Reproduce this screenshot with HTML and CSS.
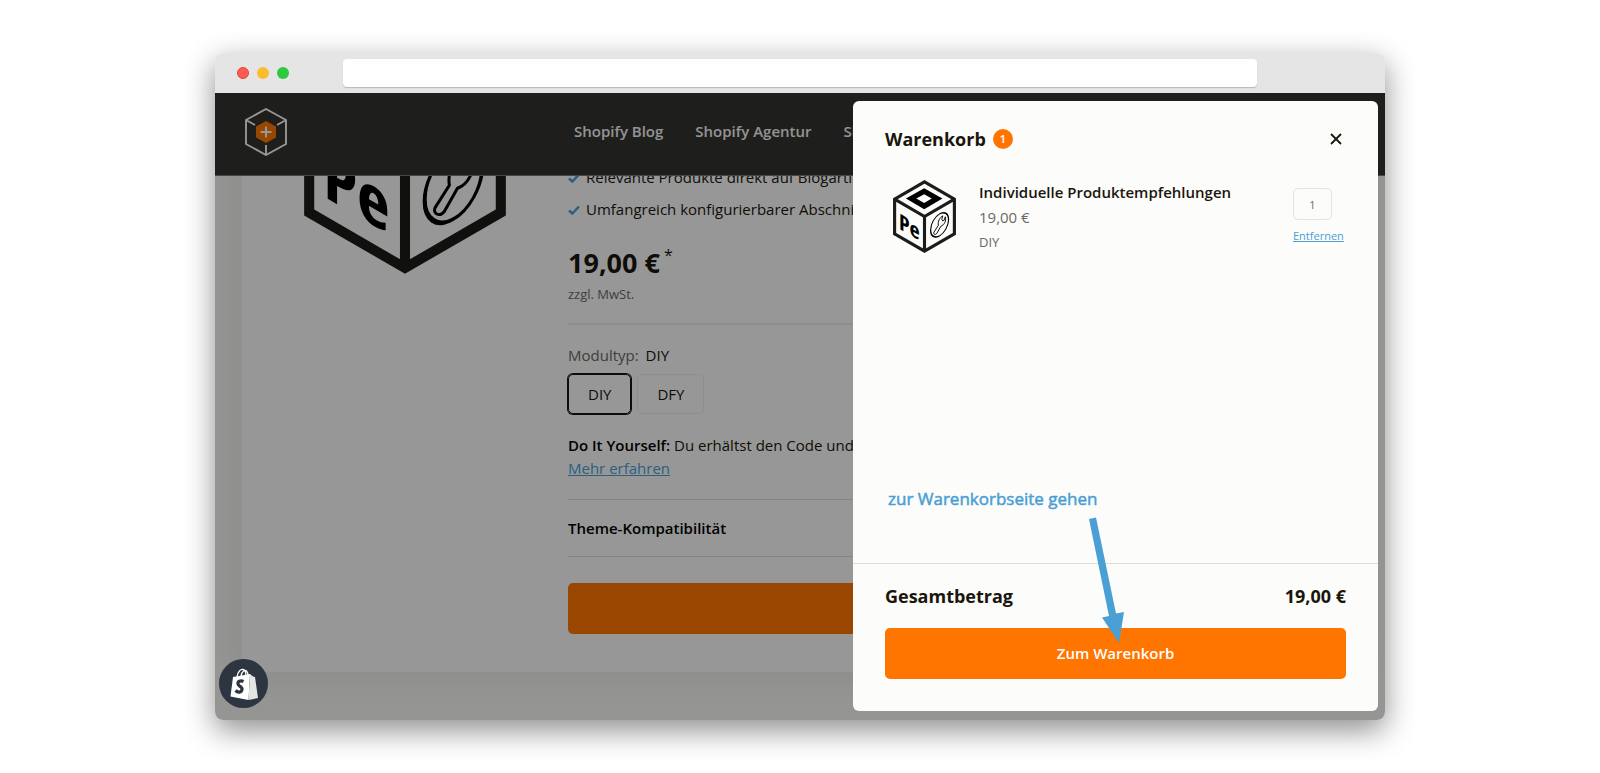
FILE: index.html
```html
<!DOCTYPE html>
<html lang="de">
<head>
<meta charset="UTF-8">
<meta name="viewport" content="width=device-width, initial-scale=1.0">
<title>Warenkorb</title>
<link rel="stylesheet" href="styles.css">
</head>
<body>

<!-- Produktwürfel, wird im Produkt und im Warenkorb verwendet -->
<svg class="sprite" aria-hidden="true">
    <symbol id="cube" viewBox="0 0 200 232">
        <path d="M100 6 195 61V171L100 226 5 171V61ZM5 61 100 116 195 61M100 116V226" fill="none" stroke="#1c1c1a" stroke-width="10"/>
        <path fill-rule="evenodd" d="M99 26 157 59 99 93 41 59ZM99 45 74 59 99 73 123 59Z"/>
        <text class="cube-text" x="19" y="144" transform="skewY(30)">Pe</text>
        <g fill="none" stroke="#000" stroke-width="4">
            <ellipse cx="148" cy="228" rx="28.500" ry="35" transform="skewY(-30)"/>
            <path stroke-width="3" stroke-linejoin="round" d="M130 166 144 144C142 132 148 119 158 114L155 125 158 130 163 127 166 117C170 129 163 143 152 147L139 170C134 176 127 172 130 166Z"/>
        </g>
    </symbol>
</svg>

<div class="browser">
    <div class="browser-bar">
        <span class="dot dot-red"></span>
        <span class="dot dot-yellow"></span>
        <span class="dot dot-green"></span>
        <input class="url" type="text" aria-label="Adresse">
    </div>

    <div class="viewport">
        <header class="site-header">
            <a class="logo" href="#" aria-label="Startseite">
                <svg width="42" height="48" viewBox="0 0 42 48" fill="none" stroke="#fcfcfc" stroke-width="1.900">
                    <path d="M21 1 41 12V36L21 47 1 36V12ZM1 12 10 17M41 12 32 17M21 47V37"/>
                    <path d="M21 13 31 18.500V29.500L21 35 11 29.500V18.500Z" fill="#ff7500" stroke="none"/>
                    <path d="M21 18.500V29.500M15.500 24H26.500" stroke-width="2"/>
                </svg>
            </a>
            <nav class="nav">
                <a href="#">Shopify Blog</a>
                <a href="#">Shopify Agentur</a>
                <a href="#">Shopify Apps</a>
            </nav>
        </header>

        <main class="content">
            <div class="product">
                <div class="gallery">
                    <svg class="cube-large"><use href="#cube"/></svg>
                </div>
                <div class="info">
                    <ul class="features">
                        <li><svg class="check" viewBox="0 0 12 10"><path d="M1 5.500 4.300 8.500 11 1.500"/></svg>Relevante Produkte direkt auf Blogartikeln</li>
                        <li><svg class="check" viewBox="0 0 12 10"><path d="M1 5.500 4.300 8.500 11 1.500"/></svg>Umfangreich konfigurierbarer Abschnitt</li>
                    </ul>
                    <div class="price">19,00 €<span class="star">*</span></div>
                    <div class="tax">zzgl. MwSt.</div>
                    <hr class="rule">
                    <fieldset class="variants">
                        <legend>Modultyp: <span class="chosen">DIY</span></legend>
                        <div class="options">
                            <input type="radio" name="type" id="diy" checked>
                            <label for="diy">DIY</label>
                            <input type="radio" name="type" id="dfy">
                            <label for="dfy">DFY</label>
                        </div>
                    </fieldset>
                    <p class="desc"><strong>Do It Yourself:</strong> Du erhältst den Code und<br><a href="#">Mehr erfahren</a></p>
                    <details class="compat">
                        <summary>Theme-Kompatibilität</summary>
                    </details>
                    <button class="button" type="button" aria-label="In den Warenkorb"></button>
                </div>
            </div>
        </main>

        <div class="overlay"></div>

        <aside class="drawer">
            <div class="drawer-head">
                <h2>Warenkorb</h2>
                <span class="count">1</span>
                <button class="close" type="button" aria-label="Schließen">
                    <svg width="12" height="12" viewBox="0 0 12 12"><path d="M1 1 11 11M11 1 1 11" stroke="#1a160d" stroke-width="1.800"/></svg>
                </button>
            </div>

            <div class="item">
                <div class="thumb"><svg class="cube-small"><use href="#cube"/></svg></div>
                <div class="item-text">
                    <h3>Individuelle Produktempfehlungen</h3>
                    <div class="item-price">19,00 €</div>
                    <div class="item-type">DIY</div>
                </div>
                <div class="item-qty">
                    <input type="text" value="1" aria-label="Anzahl">
                    <a href="#">Entfernen</a>
                </div>
            </div>

            <div class="drawer-foot">
                <div class="total"><span>Gesamtbetrag</span><span>19,00 €</span></div>
                <button class="button" type="button">Zum Warenkorb</button>
            </div>

            <div class="note">zur Warenkorbseite gehen</div>
            <svg class="arrow" viewBox="0 0 36 128"><path d="M1 3 8 1.500 28 97.500 36 96 31 127 14 101.500 21 100Z" fill="#4a9fd5"/></svg>
        </aside>

        <a class="shopify" href="#" aria-label="Shopify">
            <svg width="28" height="32" viewBox="0 0 28 32">
                <path d="M3 9 20 6 18.500 32 0.500 28.500Z" fill="#fff"/>
                <path d="M20 6 23 8.500 25 9 28 30 18.500 32Z" fill="#e4e4e4"/>
                <path d="M7 9C8 3 11 1 13 1.500S16 5 16 8M11 8C12 3 15 1.500 16.500 3S18 6 18 7" fill="none" stroke="#fff" stroke-width="1.300"/>
                <path d="M13.500 13.500C10.500 12 7.500 13.500 8 16S12.500 18.500 12 21.500 8 25 5.500 22.500" fill="none" stroke="#2d3541" stroke-width="3.200"/>
            </svg>
        </a>
    </div>
</div>

</body>
</html>
```

FILE: styles.css
```css
* {
    box-sizing: border-box;
}
body {
    margin: 0;
    min-height: 100vh;
    padding: 24px;
    display: flex;
    align-items: center;
    justify-content: center;
    background-color: #fff;
    color: #1a160d;
    font-family: "Open Sans", sans-serif;
    font-size: 15px;
}
h2, h3, p, ul {
    margin: 0;
    padding: 0;
}
a {
    color: #4a9fd5;
}
.sprite {
    position: absolute;
    width: 0;
    height: 0;
}
.cube-text {
    font-family: "Open Sans Condensed", "Roboto Condensed", "Open Sans", sans-serif;
    font-weight: bold;
    font-size: 70px;
}

/* Browserfenster */
.browser {
    width: 100%;
    max-width: 1170px;
    border-radius: 8px;
    box-shadow: 0 10px 30px rgba(0, 0, 0, 0.45);
}
.browser-bar {
    display: flex;
    align-items: center;
    gap: 8px;
    height: 40px;
    padding: 0 128px 0 22px;
    background-color: #e5e5e5;
    border-radius: 8px 8px 0 0;
}
.dot {
    width: 12px;
    height: 12px;
    border-radius: 50%;
}
.dot-red {
    background-color: #ff5a52;
    border: 1px solid #e0443e;
}
.dot-yellow {
    background-color: #fdbc2e;
}
.dot-green {
    background-color: #2dc940;
}
.url {
    flex: 1;
    height: 28px;
    margin-left: 46px;
    padding: 0 10px;
    border: none;
    border-radius: 4px;
    background-color: #fff;
    box-shadow: 0 1px 1px rgba(0, 0, 0, 0.2);
}
.viewport {
    position: relative;
    overflow: hidden;
    border-radius: 0 0 8px 8px;
    background-color: #f9f9f5;
}

/* Shop */
.site-header {
    display: grid;
    grid-template-columns: 329px 1fr;
    align-items: center;
    height: 83px;
    padding: 0 30px;
    background-color: #33322f;
    border-bottom: 1px solid #777672;
}
.logo {
    display: flex;
    padding-bottom: 5px;
}
.nav {
    display: flex;
    gap: 32px;
    padding-bottom: 6px;
}
.nav a {
    color: #f5f5f5;
    font-weight: 600;
    text-decoration: none;
    white-space: nowrap;
}
.content {
    overflow: hidden;
    padding: 0 27px 48px;
}
.product {
    display: flex;
    margin-top: -136px;
    background-color: #fcfcfc;
    box-shadow: 0 0 36px rgba(30, 25, 10, 0.1);
}
.gallery {
    flex: 0 0 326px;
    text-align: center;
}
.cube-large {
    width: 202px;
    height: 234px;
}
.info {
    flex: 1;
    padding: 121px 63px 38px 0;
}
.features {
    list-style: none;
    line-height: 32px;
    white-space: nowrap;
}
.check {
    width: 12px;
    height: 10px;
    margin-right: 6px;
    fill: none;
    stroke: #4a9fd5;
    stroke-width: 2.5;
}
.price {
    margin-top: 20px;
    font-size: 27px;
    font-weight: bold;
    line-height: 36px;
}
.star {
    margin-left: 4px;
    font-size: 16px;
    font-weight: normal;
    line-height: 1;
    vertical-align: 12px;
}
.tax {
    margin-top: 3px;
    color: #6b6963;
    font-size: 13px;
    line-height: 20px;
}
.rule {
    height: 2px;
    margin: 19px 0;
    border: none;
    background-color: #ececea;
}
.variants {
    margin: 0;
    padding: 0;
    border: none;
}
.variants legend {
    padding: 0;
    color: #6b6963;
    line-height: 22px;
}
.chosen {
    margin-left: 3px;
    color: #1a160d;
}
.options {
    display: flex;
    gap: 6px;
    margin-top: 8px;
}
.options input {
    position: absolute;
    opacity: 0;
}
.options label {
    padding: 0 19px;
    border: 1px solid #ebebe9;
    border-radius: 5px;
    line-height: 38px;
}
.options input:checked + label {
    border-color: #1a160d;
    box-shadow: 0 0 0 1px #1a160d;
}
.desc {
    margin-top: 20px;
    line-height: 23px;
    white-space: nowrap;
}
.desc strong {
    color: #000;
    font-weight: 600;
}
.compat {
    margin-top: 19px;
    border-top: 1px solid #dcdcda;
    border-bottom: 1px solid #dcdcda;
}
.compat summary {
    color: #000;
    font-weight: 600;
    line-height: 56px;
    list-style: none;
}
.button {
    display: block;
    width: 100%;
    height: 51px;
    padding: 0 0 2px;
    border: none;
    border-radius: 5px;
    background-color: #ff7500;
    color: #fff;
    font-family: inherit;
    font-size: 15px;
    font-weight: 600;
    cursor: pointer;
}
.info .button {
    margin-top: 26px;
}
.overlay {
    position: absolute;
    inset: 0;
    background-color: rgba(0, 0, 0, 0.4);
}

/* Warenkorb */
.drawer {
    position: absolute;
    top: 8px;
    right: 7px;
    bottom: 9px;
    display: flex;
    flex-direction: column;
    width: 525px;
    border-radius: 6px;
    background-color: #fcfcfa;
}
.drawer-head {
    display: flex;
    align-items: center;
    padding: 24px 32px 0;
}
.drawer-head h2 {
    font-size: 18px;
    line-height: 28px;
}
.count {
    width: 20px;
    margin-left: 7px;
    border-radius: 50%;
    background-color: #ff7500;
    color: #fff;
    font-size: 11px;
    font-weight: 600;
    line-height: 20px;
    text-align: center;
}
.close {
    display: flex;
    margin-left: auto;
    padding: 4px;
    border: none;
    background: none;
    cursor: pointer;
}
.item {
    display: flex;
    flex: 1;
    align-items: flex-start;
    gap: 16px;
    padding: 27px 32px 0;
}
.thumb {
    width: 78px;
    text-align: center;
}
.cube-small {
    width: 63px;
    height: 73px;
}
.item-text {
    flex: 1;
    line-height: 25px;
}
.item-text h3 {
    font-size: 15px;
    font-weight: 600;
}
.item-price {
    color: #6b6963;
}
.item-type {
    color: #6b6963;
    font-size: 13px;
}
.item-qty {
    display: flex;
    flex-direction: column;
    gap: 8px;
    width: 53px;
    padding-top: 8px;
    font-size: 11px;
    line-height: 16px;
}
.item-qty input {
    width: 39px;
    height: 32px;
    padding: 0;
    border: 1px solid #e3e3e1;
    border-radius: 5px;
    background: none;
    color: #6b6963;
    font: inherit;
    text-align: center;
}
.drawer-foot {
    padding: 18px 32px 32px;
    border-top: 1px solid #dcdcda;
}
.total {
    display: flex;
    justify-content: space-between;
    margin-bottom: 18px;
    font-size: 18px;
    font-weight: bold;
    line-height: 28px;
}
.note {
    position: absolute;
    bottom: 200px;
    left: 35px;
    color: #4a9fd5;
    font-size: 17px;
    line-height: 24px;
    -webkit-text-stroke: 0.5px #4a9fd5;
}
.arrow {
    position: absolute;
    right: 254px;
    bottom: 67px;
    width: 36px;
    height: 128px;
}
.shopify {
    position: absolute;
    bottom: 12px;
    left: 4px;
    display: flex;
    align-items: center;
    justify-content: center;
    width: 49px;
    height: 49px;
    border-radius: 50%;
    background-color: #2d3541;
}
```
